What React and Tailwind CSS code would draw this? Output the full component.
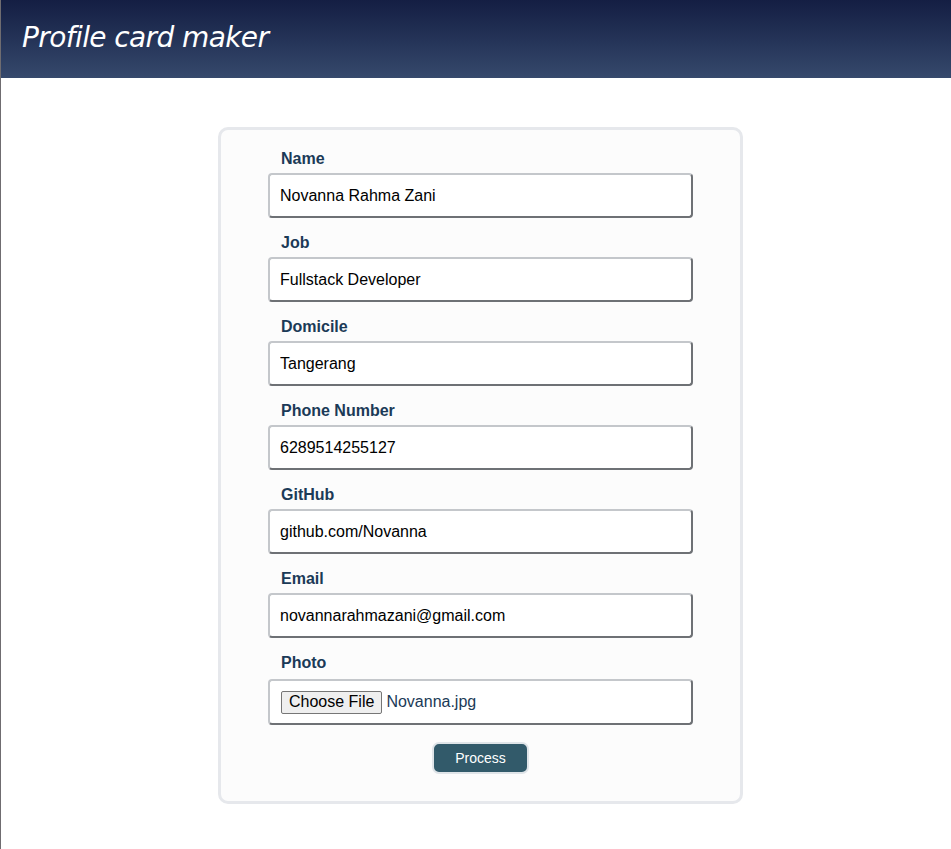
import { useState } from 'react';

const fields = [
  { label: 'Name', name: 'name', value: 'Novanna Rahma Zani' },
  { label: 'Job', name: 'job', value: 'Fullstack Developer' },
  { label: 'Domicile', name: 'domicile', value: 'Tangerang' },
  { label: 'Phone Number', name: 'phone', value: '6289514255127' },
  { label: 'GitHub', name: 'github', value: 'github.com/Novanna' },
  { label: 'Email', name: 'email', value: 'novannarahmazani@gmail.com' },
];

const boxBorder =
  'border-2 border-t-[#c4c7cb] border-l-[#c4c7cb] border-b-[#6e7175] border-r-[#6e7175] rounded-[4px]';

export default function App() {
  const [formData, setFormData] = useState(
    Object.fromEntries(fields.map((f) => [f.name, f.value]))
  );

  const handleChange = (e) => {
    setFormData({ ...formData, [e.target.name]: e.target.value });
  };

  return (
    <div className="min-h-[849px] bg-white border-l border-[#6f6c70] font-['Liberation_Sans',Arial,sans-serif]">
      {/* Header */}
      <header className="h-[78px] bg-gradient-to-b from-[#141e43] to-[#36496c] flex items-center pl-[21px]">
        <h1 className="text-white italic text-[28px] font-['DejaVu_Sans',sans-serif] tracking-[-0.6px] pb-[3px]">
          Profile card maker
        </h1>
      </header>

      {/* Form card */}
      <div className="ml-[217px] mt-[49px] w-[525px] bg-[#fcfcfc] border-[3px] border-[#e6e8ec] rounded-[10px] pt-[19px] pb-[27px] pl-[47px]">
        <form onSubmit={(e) => e.preventDefault()}>
          {fields.map((f) => (
            <div key={f.name} className="mb-[15px]">
              <label className="block pl-[13px] text-[16px] leading-[20px] font-bold text-[#1b3a57] mb-[4px]">
                {f.label}
              </label>
              <input
                type="text"
                name={f.name}
                value={formData[f.name]}
                onChange={handleChange}
                className={`w-[425px] h-[45px] ${boxBorder} bg-white pl-[10px] text-[16px] text-black outline-none`}
              />
            </div>
          ))}

          <div>
            <label className="block pl-[13px] text-[16px] leading-[20px] font-bold text-[#1b3a57] mb-[6px]">
              Photo
            </label>
            <div className={`w-[425px] h-[46px] ${boxBorder} bg-white flex items-center pl-[11px] gap-[4px]`}>
              <span className="bg-[#efefef] border border-[#767676] rounded-[2px] px-[7px] h-[23px] flex items-center text-[16px] text-black">
                Choose File
              </span>
              <span className="text-[16px] text-[#1b3a57]">Novanna.jpg</span>
            </div>
          </div>

          <div className="w-[425px] flex justify-center mt-[17px]">
            <button
              type="submit"
              className="w-[97px] h-[32px] bg-[#325a6a] border-2 border-[#dfe4e8] rounded-[7px] text-white text-[14px]"
            >
              Process
            </button>
          </div>
        </form>
      </div>
    </div>
  );
}
